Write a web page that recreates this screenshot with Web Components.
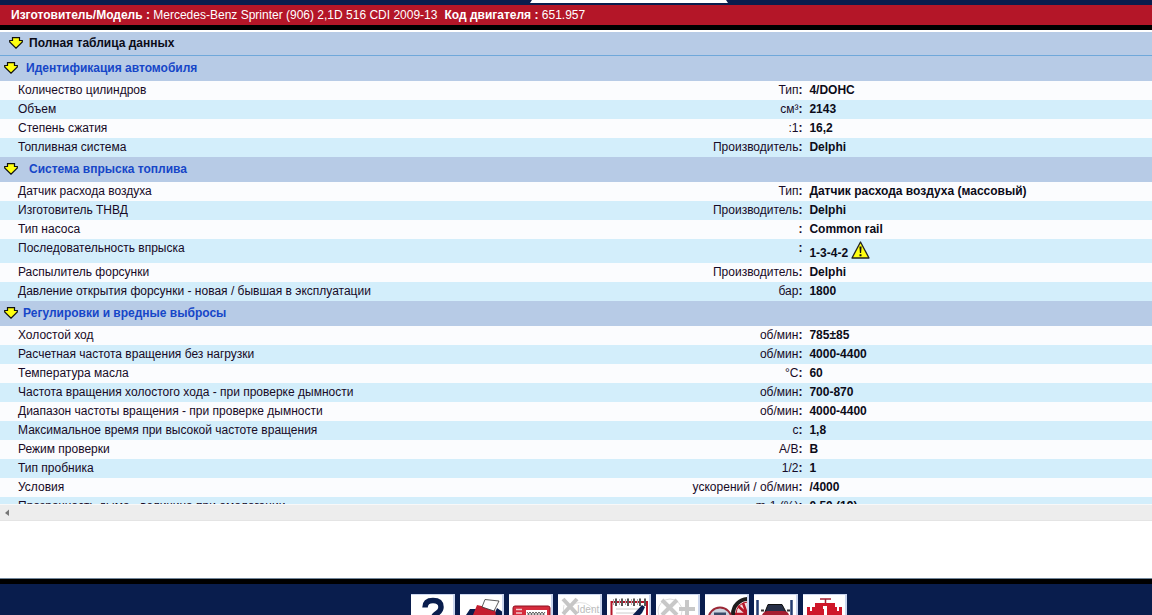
<!DOCTYPE html>
<html lang="ru">
<head>
<meta charset="utf-8">
<title>Полная таблица данных</title>
<style>
  :root { --navy:#091d4d; --red:#b41628; --head:#b7cbe6; --blue:#1646c8; --shift:106px; }
  body { margin:0; font:12px/14px "Liberation Sans", Arial, sans-serif; color:#170a26; background:#fff; }
</style>
</head>
<body>
<app-shell>
  <app-tab slot="top"></app-tab>
  <vehicle-bar slot="top" maker="Mercedes-Benz Sprinter (906) 2,1D 516 CDI 2009-13" engine="651.957"></vehicle-bar>
  <section-title slot="data" class="main"><span>Полная таблица данных</span></section-title>
  <data-section slot="data" name="ident"><span>Идентификация автомобиля</span></data-section>
  <data-section slot="data" name="inject"><span>Система впрыска топлива</span></data-section>
  <data-section slot="data" name="tuning"><span>Регулировки и вредные выбросы</span></data-section>
  <scroll-strip slot="scroll"></scroll-strip>
  <tool-bar slot="bottom"></tool-bar>
</app-shell>
<script>
const define = (name, html, setup) => customElements.define(name, class extends HTMLElement {
  connectedCallback() {
    if (this.shadowRoot) return;
    const template = document.createElement('template');
    template.innerHTML = html;
    this.attachShadow({ mode: 'open' }).append(template.content.cloneNode(true));
    if (setup) setup(this, this.shadowRoot);
  }
});

define('app-shell', `
  <style>
    :host { display:flex; flex-direction:column; height:100vh; overflow:hidden; }
    header, footer { flex:none; }
    main { flex:1; min-height:0; overflow:hidden; border-top:2px solid #fff; }
    .gap { flex:none; height:58px; background:#fff; }
  </style>
  <header><slot name="top"></slot></header>
  <main><slot name="data"></slot></main>
  <slot name="scroll"></slot>
  <div class="gap"></div>
  <footer><slot name="bottom"></slot></footer>`);

define('app-tab', `
  <style>
    :host { display:flex; justify-content:center; height:5px; padding-left:var(--shift); background:var(--navy); }
    div { width:198px; height:3px; background:#fff; clip-path:polygon(2px 0, 196px 0, 100% 100%, 0 100%); }
  </style><div></div>`);

define('vehicle-bar', `
  <style>
    :host { display:block; background:var(--red); color:#fff; border-bottom:5px solid #000; }
    p { display:flex; gap:7px; margin:0; padding:3px 11px; white-space:nowrap; }
  </style><p><span><b>Изготовитель/Модель :</b> <span id="maker"></span></span><span><b>Код двигателя :</b> <span id="engine"></span></span></p>`,
  (el, root) => {
    for (const key of ['maker', 'engine']) root.getElementById(key).textContent = el.getAttribute(key);
  });

define('down-arrow', `
  <style>:host { display:block; flex:none; width:14px; height:12px; } svg { display:block; }</style>
  <svg width="14" height="12" viewBox="0 0 14 12"><path d="M3.500 .7H10.500V3.500H13.300V5L7 11.200 .7 5V3.500H3.500Z" fill="#ffff10" stroke="#111" stroke-width="1.2"/></svg>`);

define('section-title', `
  <style>
    :host { display:block; background:var(--head); color:var(--blue); }
    h2 { display:flex; align-items:center; gap:var(--title-gap, 7px); margin:0; padding:5px 4px 6px; font-size:12px; line-height:14px; }
    :host(.main) { color:#0b0b18; border-bottom:1px solid #6fa8da; }
    :host(.main) h2 { gap:6px; padding:4px 9px 5px; }
  </style><h2><down-arrow></down-arrow><slot></slot></h2>`);

const DATA = {
  ident: { gap: 8, rows: [
    ['Количество цилиндров', 'Тип', '4/DOHC'],
    ['Объем', 'см³', '2143'],
    ['Степень сжатия', ':1', '16,2'],
    ['Топливная система', 'Производитель', 'Delphi']] },
  inject: { gap: 11, rows: [
    ['Датчик расхода воздуха', 'Тип', 'Датчик расхода воздуха (массовый)'],
    ['Изготовитель ТНВД', 'Производитель', 'Delphi'],
    ['Тип насоса', '', 'Common rail'],
    ['Последовательность впрыска', '', '1-3-4-2', true],
    ['Распылитель форсунки', 'Производитель', 'Delphi'],
    ['Давление открытия форсунки - новая / бывшая в эксплуатации', 'бар', '1800']] },
  tuning: { gap: 5, rows: [
    ['Холостой ход', 'об/мин', '785±85'],
    ['Расчетная частота вращения без нагрузки', 'об/мин', '4000-4400'],
    ['Температура масла', '°C', '60'],
    ['Частота вращения холостого хода - при проверке дымности', 'об/мин', '700-870'],
    ['Диапазон частоты вращения - при проверке дымности', 'об/мин', '4000-4400'],
    ['Максимальное время при высокой частоте вращения', 'с', '1,8'],
    ['Режим проверки', 'A/B', 'B'],
    ['Тип пробника', '1/2', '1'],
    ['Условия', 'ускорений / об/мин', '/4000'],
    ['Прозрачность дыма - величина при омологации', 'm-1 (%)', '0,50 (19)']] }
};

const WARNING = `<svg width="19" height="18" viewBox="0 0 19 18" role="img" aria-label="Внимание">
  <path d="M9.5 1 18 17H1Z" fill="#ffff10" stroke="#222" stroke-width="1.3" stroke-linejoin="round"/>
  <path d="M8.4 5.5h2.2l-.5 6.5H8.9ZM8.5 13.2h2v2h-2Z" fill="#111"/></svg>`;

define('data-section', `
  <style>
    :host { display:block; }
    table { width:100%; table-layout:fixed; border-collapse:collapse; }
    th, td { padding:2px 4px 3px 3px; vertical-align:top; white-space:nowrap; }
    th { width:50%; padding-left:18px; box-sizing:border-box; font-weight:normal; text-align:left; }
    .unit { width:20%; box-sizing:border-box; text-align:right; }
    .value { font-weight:bold; color:#0b0b18; }
    tr { background:#fbfcfe; }
    tr:nth-child(even) { background:#d3eefb; }
    .warn { display:flex; align-items:flex-end; gap:3px; height:19px; }
    .warn svg { align-self:flex-start; }
  </style>
  <section-title><slot></slot></section-title><table><tbody></tbody></table>`,
  (el, root) => {
    const { gap, rows } = DATA[el.getAttribute('name')];
    root.querySelector('section-title').style.setProperty('--title-gap', gap + 'px');
    root.querySelector('tbody').innerHTML = rows.map(([name, unit, value, warn]) =>
      `<tr><th scope="row">${name}</th><td class="unit">${unit}<b>:</b></td><td class="value">${
        warn ? `<div class="warn">${value}${WARNING}</div>` : value}</td></tr>`).join('');
  });

define('scroll-strip', `
  <style>
    :host { display:flex; flex:none; align-items:center; height:15px; padding:0 4px; background:#ededed; border-top:1px solid #f8f8f8; border-bottom:1px solid #e4e4e4; }
    svg { display:block; }
  </style><svg width="6" height="8" viewBox="0 0 6 8"><path d="M5 .5V7L1 4Z" fill="#777"/></svg>`);

const TOOLS = [
  ['Справка', `<path d="M14 12.500Q14 5.500 22 5.500T30 12Q30 16 25 19Q22 21 22 26" fill="none" stroke="#091d4d" stroke-width="5.500"/>`],
  ['Печать', `<path d="M6 20 10 14H18L15 20H34L37 13 44 18V30H6Z" fill="#091d4d"/><path d="M17 10 35 14 37 30H9Z" fill="#c41e2f"/><path d="M22 12 25 4.500 39 6 34 16Z" fill="#fff" stroke="#333" stroke-width=".8"/>`],
  ['Код', `<rect x="4" y="11" width="37" height="24" rx="2" fill="#d52c3d" stroke="#8d1020"/><path d="M7 14.500H13M7 18H13" stroke="#f3c9cd" stroke-width="1.500"/><rect x="17" y="15" width="21" height="10" fill="#fff"/><path d="m18 17 3 4m0-4-3 4m3-4 3 4m0-4-3 4m3-4 3 4m0-4-3 4m3-4 3 4m0-4-3 4m3-4 3 4m0-4-3 4m3-4 3 4m0-4-3 4" stroke="#333" stroke-width=".8"/>`],
  ['Идентификация', `<path d="M14 9Q30 4 36 16M9 22Q4 16 6 10" fill="none" stroke="#e2e2e2"/><path d="M5 4 19 19M19 4 5 19" stroke="#c6c6c6" stroke-width="4"/><text x="19" y="18" font-size="10" fill="#bbb">Ident</text>`],
  ['Заметки', `<path d="M4.500 30V7H40V30" fill="#fff" stroke="#b41628" stroke-width="2"/><path d="M9 14H34M9 18H34" stroke="#ccc"/><path d="M9 3.500V11M15 3.500V11M21 3.500V11M27 3.500V11M33 3.500V11M38 3.500V11" stroke="#555" stroke-width="2"/><path d="M6.500 4V10M12.500 4V10M18.500 4V10M24.500 4V10M30.500 4V10" stroke="#aaa"/><path d="M23 23 35 10 38 12 35 18 27 26Z" fill="#091d4d"/>`],
  ['Добавить', `<circle cx="14" cy="16" r="12" fill="none" stroke="#ddd"/><path d="M6 5 21 20M21 5 6 20M31 5V22M23 14H39" stroke="#c8c8c8" stroke-width="4"/>`],
  ['Колёса', `<circle cx="43" cy="19" r="15" fill="#f3dadd" stroke="#1c1c1c" stroke-width="4"/><circle cx="43" cy="19" r="12" fill="none" stroke="#b41628"/><path d="M42 19 33 11M42 19 30 19M42 19 38 8" stroke="#b41628" stroke-width="2.500"/><circle cx="15" cy="24" r="11.500" fill="#cbd4df" stroke="#9b2836" stroke-width="2"/><path d="M9 19H21" stroke="#394a68" stroke-width="3"/>`],
  ['Подъёмник', `<path d="M3.500 5V30M37.500 5V30" stroke="#243c70" stroke-width="2.500"/><path d="M11 17 14 9.500H28L32 17Z" fill="#283047" stroke="#111"/><path d="M8 20Q10 16 14 16H29Q34 16 35 20V28H8Z" fill="#a51f31"/><path d="M7 15.500H10M33 15.500H36" stroke="#333" stroke-width="2"/>`],
  ['Двигатель', `<path d="M17 4H28M22.500 4V8" stroke="#a51f31" stroke-width="1.500"/><path d="M12 8H32V12H34V16H36V12H39V28H4V12H7V16H9V12H12Z" fill="#cf1729"/><path d="M20 11H24V28H21V14H20Z" fill="#fff"/>`]
];

define('tool-bar', `
  <style>
    :host { display:block; height:31px; overflow:hidden; background:var(--navy); border-top:5px solid #000; box-shadow:0 -1px #71869a; }
    nav { display:flex; justify-content:center; gap:5px; padding:10px 0 0 var(--shift); }
    button { flex:none; box-sizing:border-box; width:44px; height:44px; margin:0; padding:0; overflow:hidden; border:0 solid #cbd6ee; border-width:1px 2px 1px 0; background:#fff; }
    svg { display:block; }
  </style><nav aria-label="Инструменты"></nav>`,
  (el, root) => {
    root.querySelector('nav').innerHTML = TOOLS.map(([name, art]) =>
      `<button type="button" aria-label="${name}"><svg width="44" height="44" viewBox="0 0 44 44">${art}</svg></button>`).join('');
  });
</script>
</body>
</html>
